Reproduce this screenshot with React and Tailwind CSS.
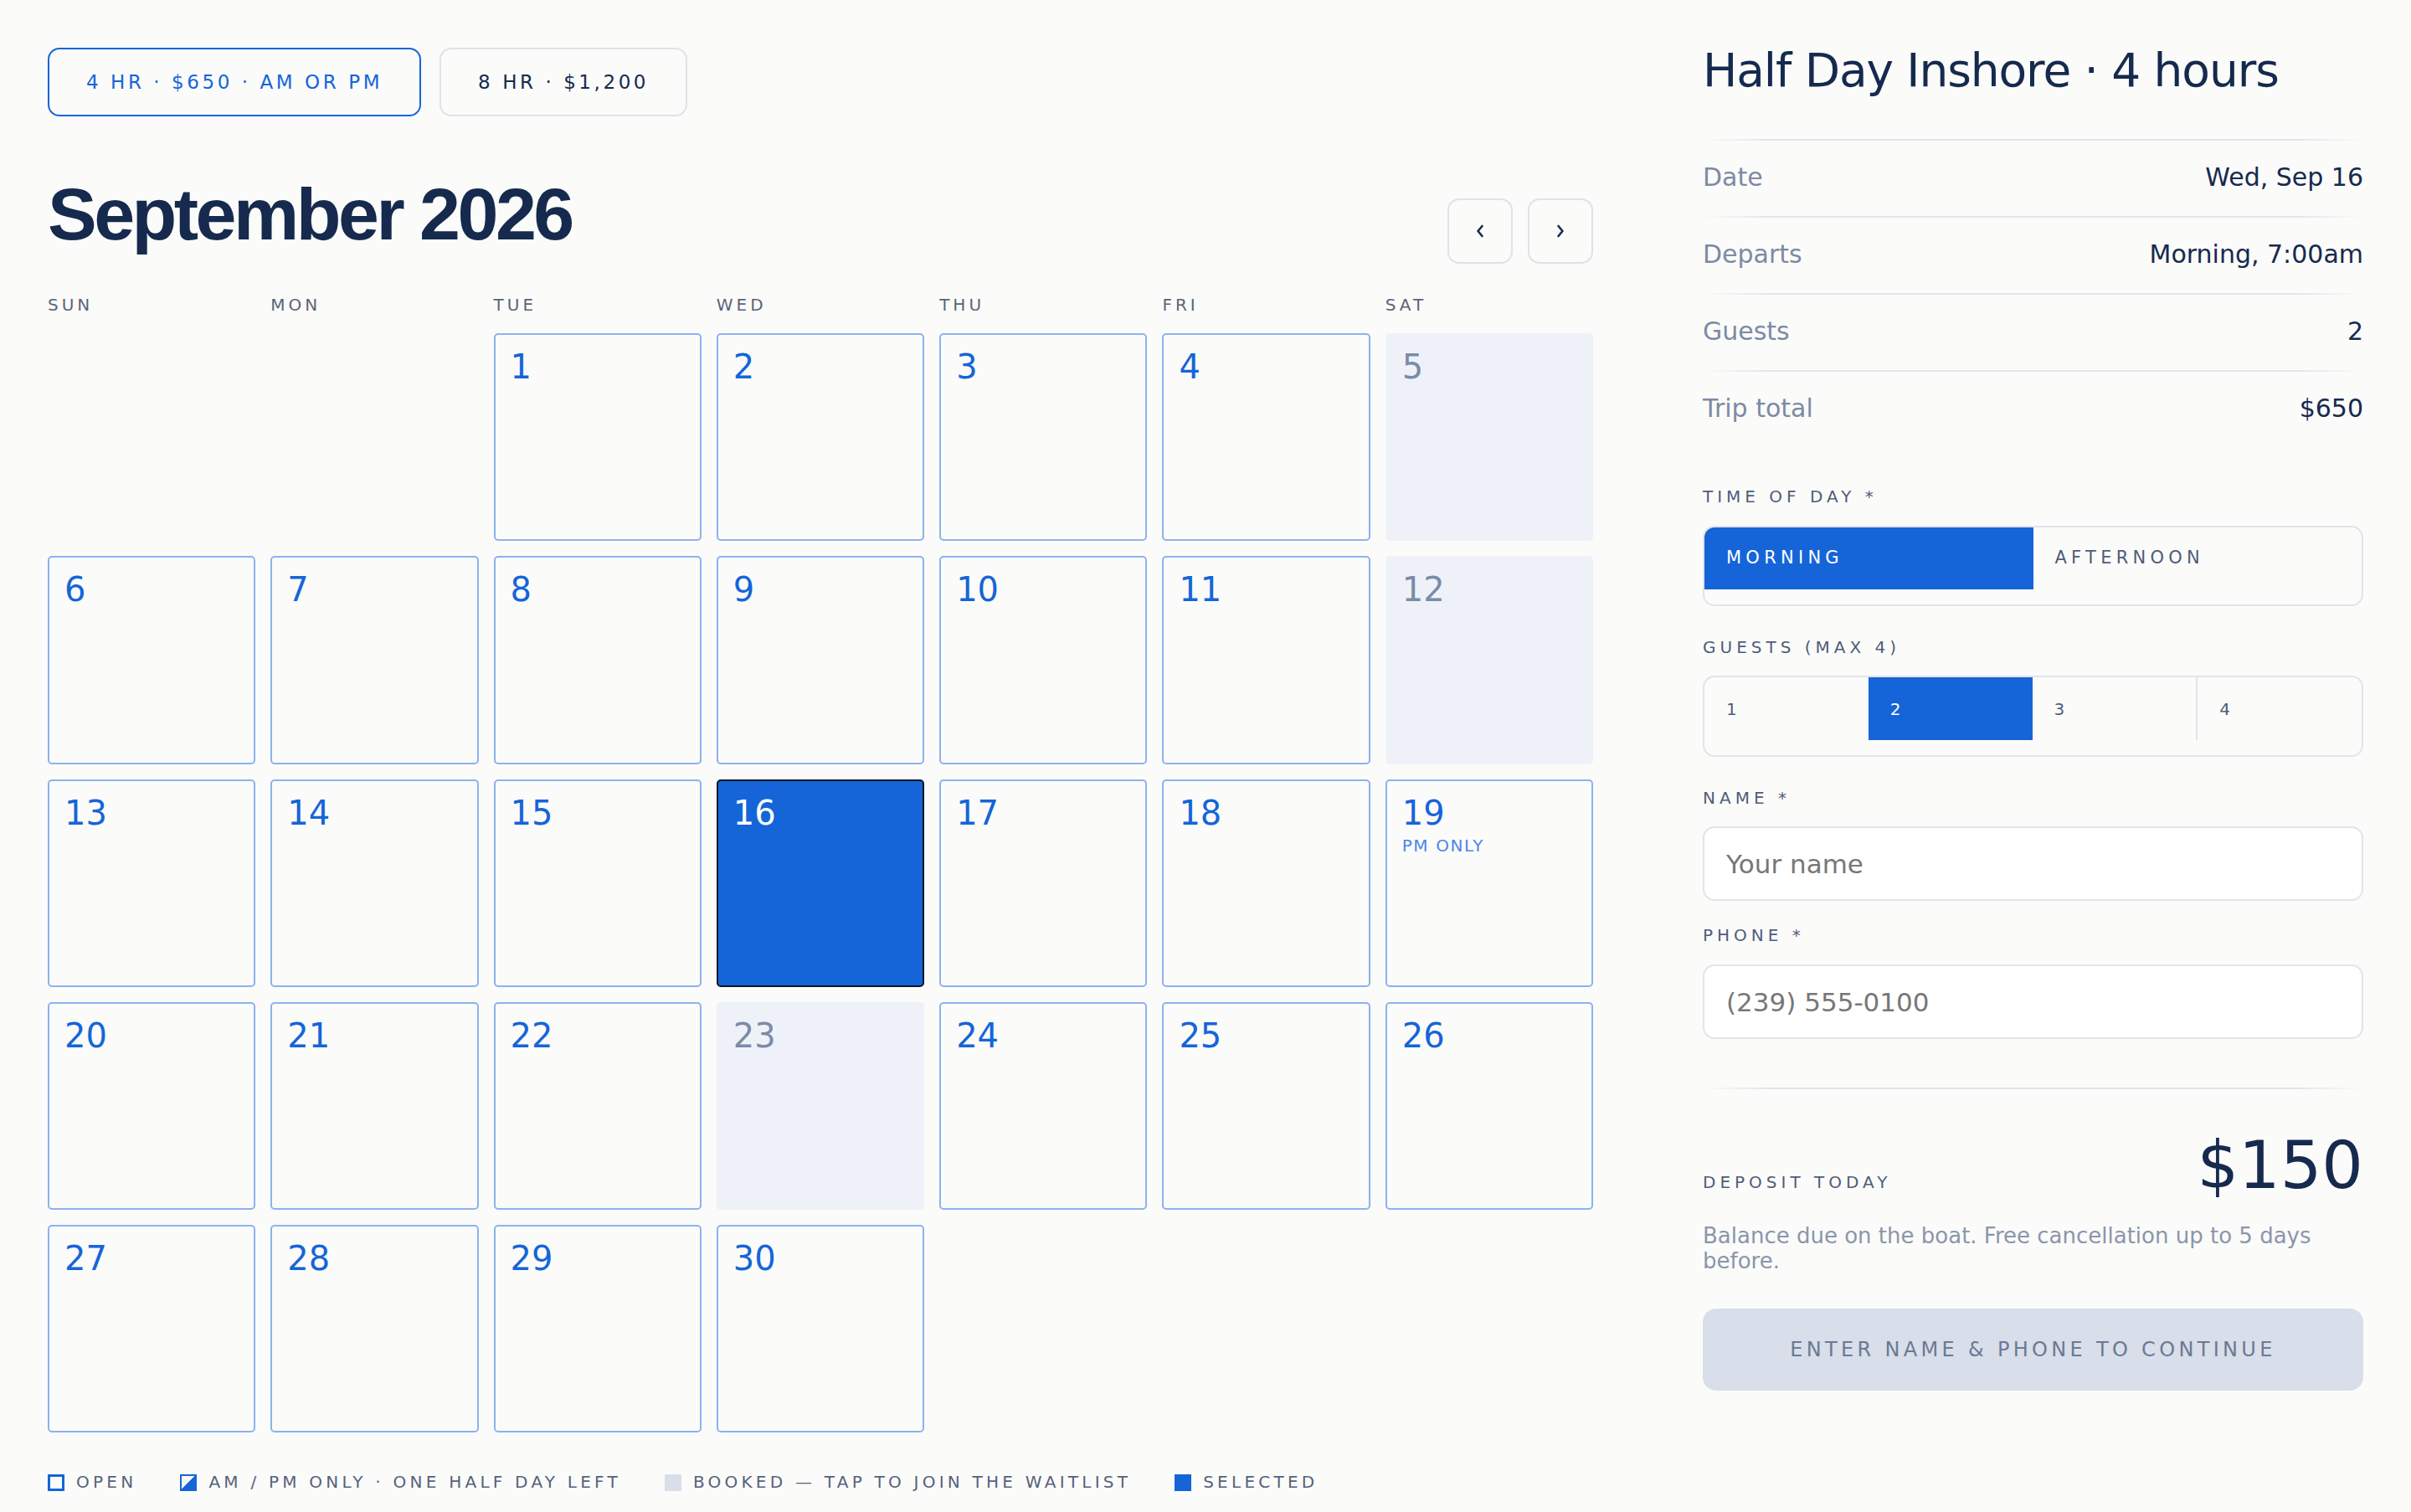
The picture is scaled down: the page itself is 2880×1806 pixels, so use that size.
import React, { useState } from 'react';

const weekdays = ['SUN', 'MON', 'TUE', 'WED', 'THU', 'FRI', 'SAT'];
const booked = [5, 12, 23];
const halfLeft = { 19: 'PM ONLY' };
const divider = 'h-[2px] bg-[linear-gradient(90deg,transparent,#e2e5ea_10%,#e2e5ea_90%,transparent)]';
const label = 'text-[20px] leading-[23px] tracking-[0.25em] text-[#4f5d78]';

const Chevron = ({ dir }) => (
  <svg width="12" height="18" viewBox="0 0 12 18" fill="none">
    <polyline
      points={dir === 'left' ? '8.5,3 3.5,9 8.5,15' : '3.5,3 8.5,9 3.5,15'}
      stroke="#162a4e"
      strokeWidth="2.6"
      strokeLinecap="round"
      strokeLinejoin="round"
    />
  </svg>
);

const DayCell = ({ day, selected, onSelect }) => {
  const isBooked = booked.includes(day);
  const note = halfLeft[day];
  let tone = 'border-[#8db2f0] text-[#1565d8]';
  if (isBooked) tone = 'border-transparent bg-[#eef2f8] text-[#7c8ba6]';
  if (selected) tone = 'border-[#0b1426] bg-[#1565d8] text-white';
  return (
    <button
      type="button"
      onClick={() => onSelect(day)}
      className={`aspect-square rounded-[5px] border-2 pl-[18px] pt-[18px] flex flex-col items-start text-left ${tone}`}
    >
      <span className="text-[40px] leading-none">{day}</span>
      {note && <span className="mt-[9px] text-[20px] leading-none tracking-[0.08em] text-[#4d86e6]">{note}</span>}
    </button>
  );
};

const LegendItem = ({ swatch, text }) => (
  <div className="flex items-center gap-[14px]">
    <span className={`w-[20px] h-[20px] shrink-0 ${swatch}`} />
    <span className="text-[20px] leading-[23px] tracking-[0.212em] text-[#55627a]">{text}</span>
  </div>
);

export default function App() {
  const [selected, setSelected] = useState(16);
  const [time, setTime] = useState('MORNING');
  const [guests, setGuests] = useState(2);
  const [plan, setPlan] = useState(0);

  const rows = [
    ['Date', 'Wed, Sep 16'],
    ['Departs', time === 'MORNING' ? 'Morning, 7:00am' : 'Afternoon, 1:00pm'],
    ['Guests', String(guests)],
    ['Trip total', '$650'],
  ];

  return (
    <div className="min-h-screen bg-[#fbfbfa] font-['DejaVu_Sans',sans-serif] text-[#162a4e] flex gap-[131px] px-[57px] pt-[57px]">
      <div className="flex-1 min-w-0">
        <div className="flex gap-[22px]">
          {['4 HR · $650 · AM OR PM', '8 HR · $1,200'].map((t, i) => (
            <button
              key={t}
              type="button"
              onClick={() => setPlan(i)}
              className={`h-[82px] rounded-[14px] border-2 px-[44px] text-[23px] tracking-[0.155em] ${
                plan === i ? 'border-[#1565d8] text-[#1565d8]' : 'border-[#e1e2e7] text-[#162a4e]'
              }`}
            >
              {t}
            </button>
          ))}
        </div>

        <div className="mt-[73px] flex items-start justify-between">
          <h1 className="font-['Liberation_Sans',Arial,sans-serif] text-[88px] leading-none font-bold tracking-[-0.04em] text-[#162a4e]">
            September 2026
          </h1>
          <div className="mt-[25px] flex gap-[18px]">
            <button type="button" className="w-[78px] h-[78px] rounded-[14px] border-2 border-[#e1e2e7] flex items-center justify-center">
              <Chevron dir="left" />
            </button>
            <button type="button" className="w-[78px] h-[78px] rounded-[14px] border-2 border-[#e1e2e7] flex items-center justify-center">
              <Chevron dir="right" />
            </button>
          </div>
        </div>

        <div className="mt-[38px] grid grid-cols-7 gap-[18px]">
          {weekdays.map((d) => (
            <span key={d} className="text-[20px] leading-[23px] tracking-[0.2em] text-[#5a6478]">{d}</span>
          ))}
        </div>

        <div className="mt-[22px] grid grid-cols-7 gap-[18px]">
          <div />
          <div />
          {Array.from({ length: 30 }, (_, i) => i + 1).map((day) => (
            <DayCell key={day} day={day} selected={selected === day} onSelect={setSelected} />
          ))}
        </div>

        <div className="mt-[48px] flex items-center gap-[52px]">
          <LegendItem swatch="border-[3px] border-[#1565d8]" text="OPEN" />
          <LegendItem
            swatch="border-2 border-[#1565d8] bg-[linear-gradient(135deg,transparent_50%,#1565d8_50%)]"
            text="AM / PM ONLY · ONE HALF DAY LEFT"
          />
          <LegendItem swatch="bg-[#d8deea]" text="BOOKED — TAP TO JOIN THE WAITLIST" />
          <LegendItem swatch="bg-[#1565d8]" text="SELECTED" />
        </div>
      </div>

      <div className="w-[789px] shrink-0">
        <h2 className="text-[55px] leading-none tracking-[-0.02em] text-[#162a4e]">Half Day Inshore · 4 hours</h2>

        <div className="mt-[54px]">
          {rows.map(([k, v]) => (
            <div key={k}>
              <div className={divider} />
              <div className="h-[90px] flex items-center justify-between text-[30px] pb-[4px]">
                <span className="text-[#7d8aa3]">{k}</span>
                <span className="text-[#162a4e]">{v}</span>
              </div>
            </div>
          ))}
        </div>

        <p className={`mt-[48px] ${label}`}>TIME OF DAY *</p>
        <div className="mt-[23px] flex overflow-hidden rounded-[14px] border-2 border-[#e3e4ea] pb-[18px]">
          {['MORNING', 'AFTERNOON'].map((t) => (
            <button
              key={t}
              type="button"
              onClick={() => setTime(t)}
              className={`flex-1 h-[74px] pl-[26px] text-left text-[21px] tracking-[0.25em] ${
                time === t ? 'bg-[#1565d8] text-white' : 'text-[#4f5d78]'
              }`}
            >
              {t}
            </button>
          ))}
        </div>

        <p className={`mt-[38px] ${label}`}>GUESTS (MAX 4)</p>
        <div className="mt-[22px] flex overflow-hidden rounded-[14px] border-2 border-[#e3e4ea] pb-[18px]">
          {[1, 2, 3, 4].map((n) => (
            <button
              key={n}
              type="button"
              onClick={() => setGuests(n)}
              className={`flex-1 h-[75px] pl-[26px] text-left text-[20px] tracking-[0.2em] ${
                guests === n ? 'bg-[#1565d8] text-white' : 'text-[#4f5d78]'
              } ${n === 4 ? 'border-l-2 border-[#e3e4ea]' : ''}`}
            >
              {n}
            </button>
          ))}
        </div>

        <p className={`mt-[38px] ${label}`}>NAME *</p>
        <input
          type="text"
          placeholder="Your name"
          className="mt-[22px] block w-full h-[89px] rounded-[14px] border-2 border-[#e3e4ea] bg-white px-[26px] text-[31px] text-[#162a4e] outline-none placeholder:text-[#777777]"
        />

        <p className={`mt-[30px] ${label}`}>PHONE *</p>
        <input
          type="tel"
          placeholder="(239) 555-0100"
          className="mt-[23px] block w-full h-[89px] rounded-[14px] border-2 border-[#e3e4ea] bg-white px-[26px] text-[31px] text-[#162a4e] outline-none placeholder:text-[#777777]"
        />

        <div className={`mt-[58px] ${divider}`} />

        <div className="mt-[52px] flex items-baseline justify-between">
          <span className={label}>DEPOSIT TODAY</span>
          <span className="text-[78px] leading-none text-[#162a4e]">$150</span>
        </div>
        <p className="mt-[30px] text-[26px] leading-[30px] text-[#8a96ab]">
          Balance due on the boat. Free cancellation up to 5 days before.
        </p>

        <button
          type="button"
          className="mt-[42px] w-full h-[98px] rounded-[16px] bg-[#d8deea] text-[24px] tracking-[0.18em] text-[#6b7a93]"
        >
          ENTER NAME &amp; PHONE TO CONTINUE
        </button>
      </div>
    </div>
  );
}
